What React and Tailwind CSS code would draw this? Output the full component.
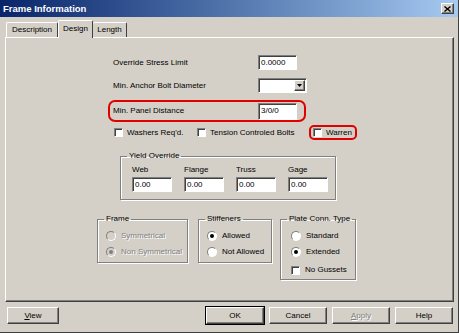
import React from 'react';

const raised =
  'border-t border-l border-white border-r border-b border-r-[#404040] border-b-[#404040] shadow-[inset_-1px_-1px_0_#808080]';
const sunken =
  'bg-white border-t border-l border-[#808080] border-r border-b border-r-white border-b-white shadow-[inset_1px_1px_0_#404040]';
const etched =
  'border border-[#808080] shadow-[inset_1px_1px_0_#ffffff,1px_1px_0_#ffffff]';

const TextBox = ({ value, className = '' }) => (
  <div className={`${sunken} flex items-center pl-[2px] ${className}`}>{value}</div>
);

const CheckBox = () => <span className={`${sunken} w-[9px] h-[9px] shrink-0`} />;

const Radio = ({ checked, disabled }) => (
  <span
    className={`w-[10px] h-[10px] rounded-full shrink-0 flex items-center justify-center border border-t-[#808080] border-l-[#808080] border-r-white border-b-white ${
      disabled ? 'bg-[#d4d0c8]' : 'bg-white'
    }`}
  >
    {checked && (
      <span className={`w-[4px] h-[4px] rounded-full ${disabled ? 'bg-[#808080]' : 'bg-black'}`} />
    )}
  </span>
);

const Group = ({ title, className = '', innerClass = '', children }) => (
  <fieldset className={`${etched} ${className}`}>
    <legend className="ml-[6px] px-[2px] leading-[10px] whitespace-nowrap">{title}</legend>
    <div className={innerClass}>{children}</div>
  </fieldset>
);

const Button = ({ children, disabled, isDefault, className = '' }) => (
  <div
    className={`h-[17px] flex items-center justify-center ${raised} ${
      isDefault ? 'outline outline-1 outline-black' : ''
    } ${disabled ? 'text-[#808080] [text-shadow:1px_1px_0_#fff]' : ''} ${className}`}
  >
    {children}
  </div>
);

export default function App() {
  const disabledText = 'text-[#808080] [text-shadow:1px_1px_0_#fff]';

  return (
    <div
      className="w-[459px] h-[333px] bg-[#d4d0c8] flex flex-col overflow-hidden border-r border-b border-r-[#404040] border-b-[#404040] text-[8px] leading-[10px] text-black"
      style={{ fontFamily: '"Liberation Sans", Arial, sans-serif' }}
    >
      {/* Title bar */}
      <div className="h-[17px] shrink-0 flex items-center pl-[3px] pr-[4px] bg-linear-to-r from-[#0a246a] to-[#a6caf0]">
        <span className="text-white font-bold text-[9.5px]">Frame Information</span>
        <div className={`ml-auto w-[13px] h-[11px] bg-[#d4d0c8] flex items-center justify-center ${raised}`}>
          <svg width="7" height="6" viewBox="0 0 7 6">
            <path d="M0.5 0.5 L6.5 5.5 M6.5 0.5 L0.5 5.5" stroke="#000" strokeWidth="1.4" />
          </svg>
        </div>
      </div>

      {/* Tabs */}
      <div className="h-[20px] shrink-0 flex items-end pl-[6px]">
        <div className="h-[15px] w-[52px] flex items-center justify-center border-t border-l border-white border-r border-r-[#404040] rounded-t-[2px]">
          Description
        </div>
        <div className="relative z-10 h-[18px] -mb-px w-[35px] flex items-center justify-center bg-[#d4d0c8] border-t border-l border-white border-r border-r-[#404040] rounded-t-[2px] pb-[2px]">
          Design
        </div>
        <div className="h-[15px] w-[34px] flex items-center justify-center border-t border-white border-r border-r-[#404040] rounded-t-[2px]">
          Length
        </div>
      </div>

      {/* Panel */}
      <div className={`ml-[5px] w-[449px] h-[265px] shrink-0 flex flex-col ${raised}`}>
        <div className="mt-[17px] ml-[107px] h-[15px] flex items-center">
          <span className="w-[145px]">Override Stress Limit</span>
          <TextBox value="0.0000" className="w-[39px] h-[15px]" />
        </div>

        <div className="mt-[8px] ml-[107px] h-[15px] flex items-center">
          <span className="w-[145px]">Min. Anchor Bolt Diameter</span>
          <div className={`${sunken} w-[49px] h-[15px] flex justify-end p-[1px]`}>
            <div className={`w-[11px] h-full bg-[#d4d0c8] flex items-center justify-center ${raised}`}>
              <svg width="5" height="3" viewBox="0 0 5 3">
                <path d="M0 0 H5 L2.5 3 Z" fill="#000" />
              </svg>
            </div>
          </div>
        </div>

        <div className="mt-[7px] ml-[102px] w-[198px] h-[22px] border-2 border-[#e00000] rounded-[7px] flex items-center pl-[3px]">
          <span className="w-[145px]">Min. Panel Distance</span>
          <TextBox value="3/0/0" className="w-[39px] h-[17px]" />
        </div>

        <div className="mt-[3px] ml-[108px] h-[15px] flex items-center">
          <div className="w-[83px] flex items-center gap-[4px]">
            <CheckBox />
            <span>Washers Req'd.</span>
          </div>
          <div className="w-[112px] flex items-center gap-[4px]">
            <CheckBox />
            <span>Tension Controled Bolts</span>
          </div>
          <div className="w-[48px] h-[15px] border-2 border-[#e00000] rounded-[5px] flex items-center gap-[4px] pl-[2px]">
            <CheckBox />
            <span>Warren</span>
          </div>
        </div>

        <Group
          title="Yield Override"
          className="mt-[11px] ml-[114px] w-[216px]"
          innerClass="pl-[11px] pb-[7px]"
        >
          <div className="grid grid-cols-[40px_40px_40px_40px] gap-x-[12px] mt-[4px]">
            {['Web', 'Flange', 'Truss', 'Gage'].map((label) => (
              <div key={label} className="flex flex-col">
                <span className="h-[10px]">{label}</span>
                <TextBox value="0.00" className="mt-[2px] w-[40px] h-[15px]" />
              </div>
            ))}
          </div>
        </Group>

        <div className="mt-[14px] ml-[91px] flex items-start">
          <Group title="Frame" className="w-[91px]" innerClass="pl-[8px] pb-[4px]">
            <div className={`mt-[6px] h-[12px] flex items-center gap-[5px] ${disabledText}`}>
              <Radio disabled />
              <span>Symmetrical</span>
            </div>
            <div className={`mt-[4px] h-[12px] flex items-center gap-[5px] ${disabledText}`}>
              <Radio disabled checked />
              <span>Non Symmetrical</span>
            </div>
          </Group>

          <Group title="Stiffeners" className="ml-[10px] w-[74px]" innerClass="pl-[8px] pb-[4px]">
            <div className="mt-[6px] h-[12px] flex items-center gap-[5px]">
              <Radio checked />
              <span>Allowed</span>
            </div>
            <div className="mt-[4px] h-[12px] flex items-center gap-[5px]">
              <Radio />
              <span>Not Allowed</span>
            </div>
          </Group>

          <Group title="Plate Conn. Type" className="ml-[8px] w-[76px]" innerClass="pl-[10px] pb-[3px]">
            <div className="mt-[6px] h-[12px] flex items-center gap-[5px]">
              <Radio />
              <span>Standard</span>
            </div>
            <div className="mt-[4px] h-[12px] flex items-center gap-[5px]">
              <Radio checked />
              <span>Extended</span>
            </div>
            <div className="mt-[6px] h-[12px] flex items-center gap-[5px]">
              <CheckBox />
              <span>No Gussets</span>
            </div>
          </Group>
        </div>
      </div>

      {/* Buttons */}
      <div className="mt-[5px] flex items-center">
        <Button className="ml-[7px] w-[52px]">
          <span>
            <span className="underline">V</span>iew
          </span>
        </Button>
        <div className="ml-auto mr-[5px] flex gap-[5px]">
          <Button isDefault className="w-[58px]">OK</Button>
          <Button className="w-[58px]">Cancel</Button>
          <Button disabled className="w-[58px]">
            <span>
              <span className="underline">A</span>pply
            </span>
          </Button>
          <Button className="w-[58px]">Help</Button>
        </div>
      </div>
    </div>
  );
}
